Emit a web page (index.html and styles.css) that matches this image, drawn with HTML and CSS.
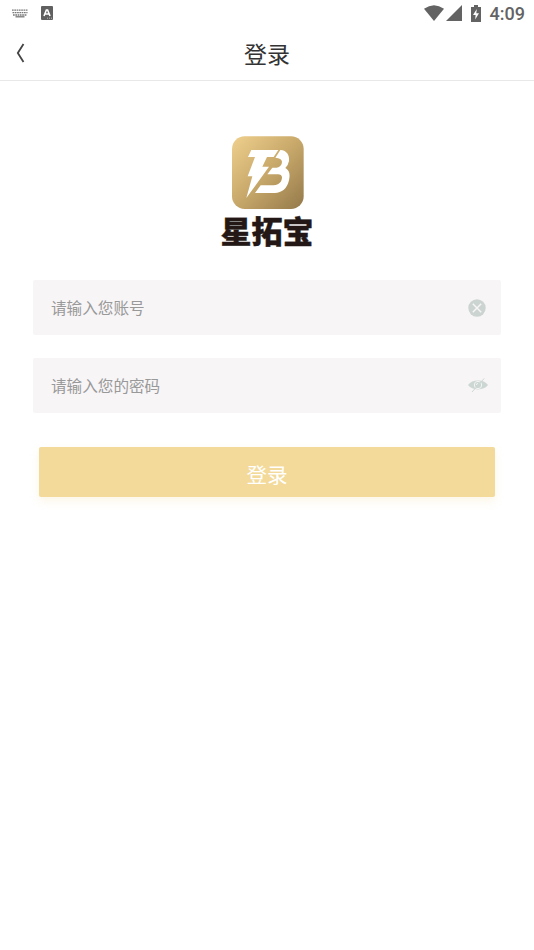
FILE: index.html
```html
<!DOCTYPE html>
<html lang="zh-CN">
<head>
<meta charset="utf-8">
<meta name="viewport" content="width=device-width, initial-scale=1">
<title>登录</title>
<link rel="stylesheet" href="styles.css">
</head>
<body>
<div class="status">
  <svg class="keyboard" width="16" height="9" viewBox="0 0 16 9"><g fill="none" stroke="#777" stroke-width="1.3"><path d="M0 1.2H16M.5 3.6H15.5M1 6H15" stroke-dasharray="1.7 .6"/><path d="M3.5 7.8H12.5"/></g></svg>
  <svg class="lang" width="12" height="14" viewBox="0 0 12 14"><rect width="12" height="14" rx="1" fill="#606060"/><path d="M3 10 5.4 4H6.6L9 10M4 8H8" fill="none" stroke="#fff" stroke-width="1.6"/><path d="M6 12.2H11" stroke="#ccc" stroke-width=".8" stroke-dasharray="1 1"/></svg>
  <svg class="wifi" width="20" height="16" viewBox="0 0 20 16"><path d="M0 3.8Q10-3.2 20 3.8L10 16Z" fill="#636363"/></svg>
  <svg class="signal" width="16" height="16" viewBox="0 0 16 16"><path d="M16 0V16H0Z" fill="#636363"/></svg>
  <svg class="battery" width="10" height="17" viewBox="0 0 10 17"><path d="M3 0H7V2H10V17H0V2H3Z" fill="#636363"/><path d="M5.8 4 2 10H4.6L4.2 14.5 8 8.3H5.3Z" fill="#fff"/></svg>
  <span class="time">4:09</span>
</div>
<header class="nav">
  <svg class="back" width="9" height="20" viewBox="0 0 9 20"><path d="M7.5 1 1.8 10 7.5 19" fill="none" stroke="#444" stroke-width="1.8"/></svg>
  <h1 class="title">登录</h1>
</header>
<main class="content">
  <div class="brand">
    <svg class="logo" width="72" height="73" viewBox="0 0 216 219">
      <defs><linearGradient id="gold" x1="0" y1="0" x2="1" y2="1"><stop offset="0" stop-color="#efd08d"/><stop offset=".5" stop-color="#c7a86a"/><stop offset="1" stop-color="#94794a"/></linearGradient></defs>
      <rect y="1" width="215" height="218" rx="38" fill="url(#gold)"/>
      <g fill="#fff">
        <path d="M58 42H139L125 63H105L91 92H111L43 186 61 121H47L69 63H48Z"/>
        <path d="M145 42C165 43 173 59 171 75Q169 87 160 96C173 103 175 117 171 133C165 158 150 171 128 171H69L86 148H125C141 148 150 137 150 124Q149 115 138 115H106L121 95H134Q150 91 150 77Q149 66 130 65Z"/>
      </g>
    </svg>
    <div class="name">星拓宝</div>
  </div>
  <form class="form">
    <label class="field"><input class="input" type="text" placeholder="请输入您账号">
      <svg class="clear" width="18" height="18" viewBox="0 0 18 18"><circle cx="9" cy="9" r="8.7" fill="#cbd4d0"/><path d="M4.8 4.8 13.2 13.2M13.2 4.8 4.8 13.2" stroke="#f7f5f6" stroke-width="1.5"/></svg></label>
    <label class="field"><input class="input" type="password" placeholder="请输入您的密码">
      <svg class="eye" width="20" height="14" viewBox="0 0 20 14"><path d="M0 7Q3.5 2.6 10 2.6T20 7Q16.5 11.4 10 11.4T0 7Z" fill="#ccd6d3"/><circle cx="10" cy="7" r="3.7" fill="none" stroke="#f4f5f4" stroke-width="1"/><path d="M8.4 7A1.7 1.7 0 0 1 10 5.4" fill="none" stroke="#f4f5f4" stroke-width=".9"/><path d="M4 14 16.2.4" stroke="#ccd6d3" stroke-width="1"/></svg></label>
    <button class="submit" type="button">登录</button>
  </form>
</main>
</body>
</html>
```
FILE: styles.css
```css
* { box-sizing: border-box; }
body {
  margin: 0;
  min-height: 950px;
  background: #fff;
  font-family: "Noto Sans CJK SC", sans-serif;
}
svg { display: block; flex: none; }
.status {
  display: flex;
  align-items: center;
  height: 27px;
  padding: 0 9px 0 12px;
}
.keyboard, .lang, .wifi, .signal, .battery { margin-bottom: 1px; }
.lang { margin-left: 13px; }
.wifi { margin-left: auto; }
.signal { margin-left: 2px; }
.battery { margin-left: 9px; }
.time {
  margin-left: 9px;
  font: 500 18px/27px Roboto, sans-serif;
  color: #636363;
}
.nav {
  display: flex;
  align-items: center;
  height: 54px;
  padding: 0 25px 2px 16px;
  border-bottom: 1px solid #e8e8e8;
}
.title {
  flex: 1;
  margin: 0;
  text-align: center;
  font-size: 23px;
  line-height: 34px;
  font-weight: 400;
  color: #333;
}
.content { padding: 55px 33px 0; }
.brand {
  display: flex;
  flex-direction: column;
  align-items: center;
  height: 144px;
}
.logo { margin-left: 1px; }
.name {
  font-size: 31px;
  line-height: 41px;
  font-weight: 900;
  color: #231815;
  -webkit-text-stroke: .4px #231815;
}
.form { display: flex; flex-direction: column; }
.field {
  display: flex;
  align-items: center;
  height: 55px;
  margin-bottom: 23px;
  padding: 0 13px 0 18px;
  border-radius: 2px;
  background: #f7f5f6;
}
.input {
  flex: 1;
  min-width: 0;
  height: 55px;
  padding: 0 0 1px;
  border: 0;
  outline: 0;
  background: transparent;
  font: 400 15.6px "Noto Sans CJK SC", sans-serif;
}
.input::placeholder { color: #999; opacity: 1; }
.clear { margin-right: 2px; }
.eye { margin-bottom: 1px; }
.submit {
  height: 50px;
  margin: 11px 6px 0;
  padding: 3px 0 0;
  border: 0;
  border-radius: 2px;
  background: #f3da9a;
  box-shadow: 0 4px 8px rgba(243, 218, 154, .25);
  font: 400 20.5px "Noto Sans CJK SC", sans-serif;
  color: #fff;
}
```
